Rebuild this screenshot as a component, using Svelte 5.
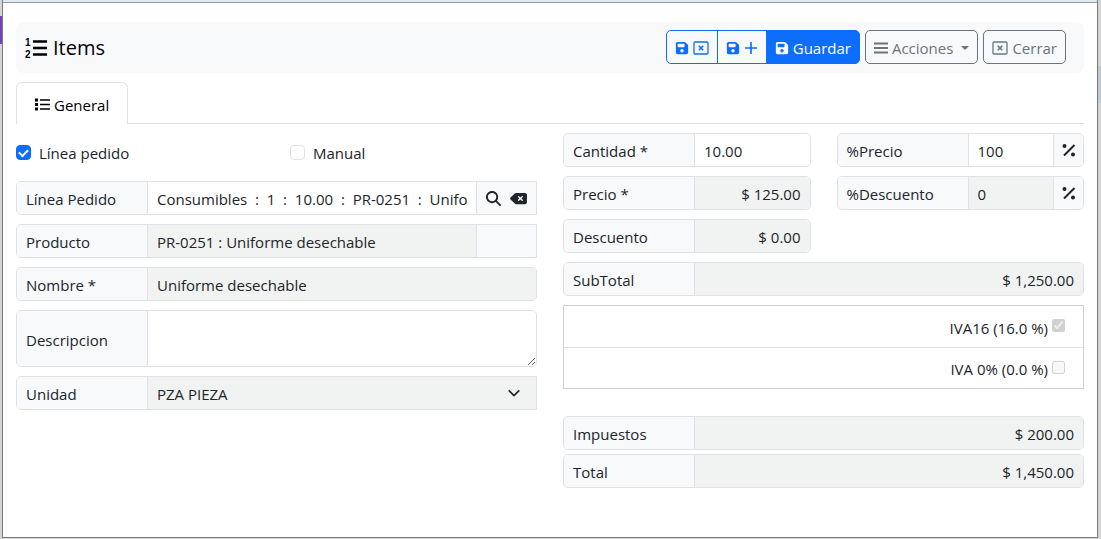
<script lang="ts">
	let useOrderLine = $state(true);
	let manual = $state(false);
	let orderLine = $state('Consumibles  :  1  :  10.00  :  PR-0251  :  Uniforme desechable');
	let description = $state('');
	let quantity = $state('10.00');
	let pricePercent = $state('100');

	const taxes = [
		{ id: 'iva16', name: 'IVA16 (16.0 %)', applied: true },
		{ id: 'iva0', name: 'IVA 0% (0.0 %)', applied: false }
	];

	const totals = [
		{ id: 'impuestos', label: 'Impuestos', value: '$ 200.00' },
		{ id: 'total', label: 'Total', value: '$ 1,450.00' }
	];
</script>

{#snippet saveIcon()}
	<svg class="icon" viewBox="0 0 448 512" fill="currentColor" aria-hidden="true">
		<path fill-rule="evenodd" d="M64 32C28.7 32 0 60.7 0 96V416c0 35.3 28.7 64 64 64H384c35.3 0 64-28.7 64-64V173.3c0-17-6.7-33.3-18.7-45.3L352 50.7C340 38.7 323.7 32 306.7 32H64zm0 96c0-17.7 14.3-32 32-32H288c17.7 0 32 14.3 32 32v64c0 17.7-14.3 32-32 32H96c-17.7 0-32-14.3-32-32V128zM224 288a64 64 0 1 1 0 128 64 64 0 1 1 0-128z" />
	</svg>
{/snippet}

{#snippet closeIcon()}
	<svg class="icon wide" viewBox="0 0 16 14" fill="none" stroke="currentColor" aria-hidden="true">
		<rect x="1" y="1" width="14" height="12" rx="1" stroke-width="1.3" />
		<path d="M5.8 4.8l4.4 4.4M10.2 4.8L5.8 9.2" stroke-width="1.6" />
	</svg>
{/snippet}

{#snippet percentIcon()}
	<svg class="icon" viewBox="0 0 14 14" aria-hidden="true">
		<path d="M2 12.5L12.5 2" stroke="currentColor" stroke-width="2" />
		<circle cx="2.5" cy="3" r="2" fill="currentColor" />
		<circle cx="11" cy="11.5" r="2" fill="currentColor" />
	</svg>
{/snippet}

<div class="backdrop">
	<main class="window">
		<header class="toolbar">
			<h1>
				<svg viewBox="0 0 22 20" aria-hidden="true">
					<path d="M8 3.5h14M8 10h14M8 16.5h14" stroke="currentColor" stroke-width="2.4" />
					<text x="0" y="8" class="digit">1</text>
					<text x="0" y="20" class="digit">2</text>
				</svg>
				Items
			</h1>
			<div class="btn-group">
				<button type="button" class="btn primary" aria-label="Guardar y cerrar">
					{@render saveIcon()}
					{@render closeIcon()}
				</button>
				<button type="button" class="btn primary" aria-label="Guardar y agregar">
					{@render saveIcon()}
					<svg class="icon" viewBox="0 0 14 14" aria-hidden="true">
						<path d="M7 1v12M1 7h12" stroke="currentColor" stroke-width="1.7" />
					</svg>
				</button>
				<button type="button" class="btn primary solid">
					{@render saveIcon()}
					Guardar
				</button>
			</div>
			<button type="button" class="btn" aria-haspopup="menu">
				<svg class="icon" viewBox="0 0 14 14" aria-hidden="true">
					<path d="M0 2.5h14M0 7h14M0 11.5h14" stroke="currentColor" stroke-width="1.8" />
				</svg>
				Acciones
				<span class="caret"></span>
			</button>
			<button type="button" class="btn">
				{@render closeIcon()}
				Cerrar
			</button>
		</header>

		<nav class="tabs" role="tablist">
			<button type="button" class="tab" role="tab" aria-selected="true">
				<svg viewBox="0 0 15 13" aria-hidden="true">
					<path d="M5 2h10M5 6.5h10M5 11h10" stroke="currentColor" stroke-width="1.6" />
					<path d="M0 2h3M0 6.5h3M0 11h3" stroke="currentColor" stroke-width="3" />
				</svg>
				General
			</button>
		</nav>

		<form class="columns">
			<div class="stack">
				<div class="checks">
					<label class="check"><input type="checkbox" bind:checked={useOrderLine} />Línea pedido</label>
					<label class="check"><input type="checkbox" bind:checked={manual} />Manual</label>
				</div>

				<div class="field square">
					<label for="linea">Línea Pedido</label>
					<input id="linea" type="text" bind:value={orderLine} />
					<div class="addon lookup">
						<button type="button" aria-label="Buscar">
							<svg class="search" viewBox="0 0 512 512" fill="currentColor">
								<path fill-rule="evenodd" d="M416 208c0 45.9-14.9 88.3-40 122.7L502.6 457.4c12.5 12.5 12.5 32.8 0 45.3s-32.8 12.5-45.3 0L330.7 376c-34.4 25.2-76.8 40-122.7 40C93.1 416 0 322.9 0 208S93.1 0 208 0S416 93.1 416 208zM208 352a144 144 0 1 0 0-288 144 144 0 1 0 0 288z" />
							</svg>
						</button>
						<button type="button" aria-label="Borrar" onclick={() => (orderLine = '')}>
							<svg class="erase" viewBox="0 0 576 512" fill="currentColor">
								<path fill-rule="evenodd" d="M576 128c0-35.3-28.7-64-64-64H205.3c-17 0-33.3 6.7-45.3 18.7L9.4 233.4c-6 6-9.4 14.1-9.4 22.6s3.4 16.6 9.4 22.6L160 429.3c12 12 28.3 18.7 45.3 18.7H512c35.3 0 64-28.7 64-64V128zM271 175c9.4-9.4 24.6-9.4 33.9 0l47 47 47-47c9.4-9.4 24.6-9.4 33.9 0s9.4 24.6 0 33.9l-47 47 47 47c9.4 9.4 9.4 24.6 0 33.9s-24.6 9.4-33.9 0l-47-47-47 47c-9.4 9.4-24.6 9.4-33.9 0s-9.4-24.6 0-33.9l47-47-47-47c-9.4-9.4-9.4-24.6 0-33.9z" />
							</svg>
						</button>
					</div>
				</div>

				<div class="field square">
					<label for="producto">Producto</label>
					<input id="producto" type="text" value="PR-0251 : Uniforme desechable" disabled />
					<div class="addon lookup"></div>
				</div>

				<div class="field">
					<label for="nombre">Nombre *</label>
					<input id="nombre" type="text" value="Uniforme desechable" disabled />
				</div>

				<div class="field tall">
					<label for="descripcion">Descripcion</label>
					<textarea id="descripcion" bind:value={description}></textarea>
				</div>

				<div class="field square">
					<label for="unidad">Unidad</label>
					<div class="select">
						<select id="unidad" disabled>
							<option>PZA PIEZA</option>
						</select>
						<svg viewBox="0 0 16 16" fill="none" stroke="currentColor" stroke-width="2" aria-hidden="true">
							<path d="M2 5l6 6 6-6" />
						</svg>
					</div>
				</div>
			</div>

			<div class="stack">
				<div class="pair">
					<div class="field">
						<label for="cantidad">Cantidad *</label>
						<input id="cantidad" type="text" bind:value={quantity} />
					</div>
					<div class="field">
						<label for="pprecio">%Precio</label>
						<input id="pprecio" type="text" bind:value={pricePercent} />
						<div class="addon">{@render percentIcon()}</div>
					</div>
					<div class="field">
						<label for="precio">Precio *</label>
						<input id="precio" class="amount" type="text" value="$ 125.00" disabled />
					</div>
					<div class="field">
						<label for="pdescuento">%Descuento</label>
						<input id="pdescuento" type="text" value="0" disabled />
						<div class="addon">{@render percentIcon()}</div>
					</div>
					<div class="field">
						<label for="descuento">Descuento</label>
						<input id="descuento" class="amount" type="text" value="$ 0.00" disabled />
					</div>
				</div>

				<div class="field">
					<label for="subtotal">SubTotal</label>
					<input id="subtotal" class="amount" type="text" value="$ 1,250.00" disabled />
				</div>

				<ul class="taxes">
					{#each taxes as tax (tax.id)}
						<li>
							<label for={tax.id}>{tax.name}</label>
							<input id={tax.id} type="checkbox" checked={tax.applied} disabled />
						</li>
					{/each}
				</ul>

				<div class="totals">
					{#each totals as total (total.id)}
						<div class="field">
							<label for={total.id}>{total.label}</label>
							<input id={total.id} class="amount" type="text" value={total.value} disabled />
						</div>
					{/each}
				</div>
			</div>
		</form>
	</main>
</div>

<style>
	:global(body) {
		margin: 0;
	}

	/* dimmed page behind the window, only its edges show */
	.backdrop {
		--border: #dee2e6;
		--blue: #0d6efd;
		--gray: #6c757d;
		box-sizing: border-box;
		min-height: 100vh;
		padding: 0 3px 1px 2px;
		background:
			linear-gradient(#6f42c1, #6f42c1) 0 16px / 2px 28px no-repeat,
			linear-gradient(#bccdd6, #bccdd6) 100% 66px / 3px 37px no-repeat,
			#d5d5d5;
		display: flex;
		color: #212529;
		font: 15px/24px 'Open Sans', 'Noto Sans', sans-serif;
	}

	.backdrop :global(*) {
		box-sizing: border-box;
	}

	.window {
		flex: 1;
		min-width: 0;
		padding: 19px 13px 16px;
		background: #fff;
		border: 1px solid #777b7d;
		border-top: 0;
		box-shadow: inset 0 2px #dcebef, inset 0 3px #969c9e;
	}

	button,
	input,
	select,
	textarea {
		font: inherit;
		color: inherit;
		margin: 0;
	}

	.toolbar {
		display: flex;
		align-items: center;
		gap: 5px;
		margin-top: 3px;
		padding: 8px 18px 9px 9px;
		background: #f8f9fb;
		border-radius: 8px;
	}

	h1 {
		flex: 1;
		display: flex;
		align-items: center;
		gap: 6px;
		margin: 0;
		padding-top: 2px;
		color: #000;
		font-size: 20px;
		font-weight: 400;
		line-height: 24px;
	}

	h1 svg {
		width: 22px;
		height: 20px;
		overflow: visible;
	}

	.digit {
		font: bold 10px 'Liberation Sans', sans-serif;
	}

	.btn {
		display: flex;
		align-items: center;
		gap: 4px;
		height: 34px;
		padding: 2px 8px 0;
		color: var(--gray);
		background: transparent;
		border: 1px solid currentColor;
		border-radius: 5px;
	}

	.btn-group {
		display: flex;
	}

	.primary {
		color: var(--blue);
	}

	.solid {
		color: #fff;
		background: var(--blue);
		border-color: var(--blue);
	}

	.btn-group .btn:not(:first-child) {
		margin-left: -1px;
		border-top-left-radius: 0;
		border-bottom-left-radius: 0;
	}

	.btn-group .btn:not(:last-child) {
		border-top-right-radius: 0;
		border-bottom-right-radius: 0;
	}

	.icon {
		width: 14px;
		height: 14px;
		flex-shrink: 0;
	}

	.icon.wide {
		width: 16px;
	}

	.caret {
		margin-left: 4px;
		border: 4px solid transparent;
		border-top-color: currentColor;
		border-bottom: 0;
	}

	.tabs {
		display: flex;
		margin-top: 9px;
		border-bottom: 1px solid var(--border);
	}

	.tab {
		display: flex;
		align-items: center;
		gap: 4px;
		height: 42px;
		margin-bottom: -1px;
		padding: 2px 18px 0;
		color: #000;
		background: #fff;
		border: 1px solid var(--border);
		border-bottom: 0;
		border-radius: 6px 6px 0 0;
	}

	.tab svg {
		width: 15px;
		height: 13px;
	}

	.columns {
		display: grid;
		grid-template-columns: 1fr 1fr;
		gap: 26px;
		margin-top: 9px;
	}

	.stack {
		display: flex;
		flex-direction: column;
		gap: 9px;
		min-width: 0;
	}

	.checks {
		display: grid;
		grid-template-columns: 274px 1fr;
		height: 39px;
		align-items: center;
	}

	.check {
		display: flex;
		align-items: center;
		gap: 8px;
	}

	input[type='checkbox'] {
		width: 15px;
		height: 15px;
		margin: 0;
	}

	.check input {
		display: grid;
		place-items: center;
		appearance: none;
		background: #fff;
		border: 1px solid var(--border);
		border-radius: 4px;
	}

	.check input:checked {
		background: var(--blue);
		border-color: var(--blue);
	}

	.check input:checked::before {
		content: '';
		width: 7px;
		height: 4px;
		margin-bottom: 2px;
		border: solid #fff;
		border-width: 0 0 2px 2px;
		transform: rotate(-45deg);
	}

	.field {
		display: flex;
		min-width: 0;
		height: 34px;
		border: 1px solid var(--border);
		border-radius: 5px;
		overflow: hidden;
	}

	.field.square {
		border-radius: 5px 0 0 5px;
	}

	.field.tall {
		height: 57px;
	}

	.field label {
		display: flex;
		align-items: center;
		flex: 0 0 131px;
		padding: 2px 9px 0;
		background: #f8f9fb;
		border-right: 1px solid var(--border);
	}

	.field input,
	.field textarea,
	.field select {
		flex: 1;
		width: 100%;
		min-width: 0;
		padding: 2px 9px 0;
		background: #fff;
		border: 0;
		border-radius: 0;
		opacity: 1;
	}

	.field input:disabled,
	.field select:disabled {
		color: #212529;
		background: #f1f3f2;
	}

	.field .amount {
		text-align: right;
	}

	.select {
		flex: 1;
		display: grid;
		align-items: center;
	}

	.select select,
	.select svg {
		grid-area: 1 / 1;
	}

	.select select {
		height: 100%;
		appearance: none;
	}

	.select svg {
		justify-self: end;
		width: 14px;
		height: 14px;
		margin-right: 15px;
		pointer-events: none;
	}

	.addon {
		display: flex;
		align-items: center;
		justify-content: center;
		flex: 0 0 30px;
		background: #f8f9fb;
		border-left: 1px solid var(--border);
	}

	.addon.lookup {
		flex-basis: 60px;
		gap: 9px;
	}

	.addon button {
		display: flex;
		padding: 0;
		background: none;
		border: 0;
	}

	.search {
		width: 15px;
		height: 15px;
	}

	.erase {
		width: 17px;
		height: 15px;
	}

	.pair {
		display: grid;
		grid-template-columns: 1fr 1fr;
		gap: 9px 26px;
	}

	.taxes {
		margin: 0;
		padding: 0;
		list-style: none;
		border: 1px solid #cdcfd1;
	}

	.taxes li {
		display: flex;
		align-items: center;
		justify-content: flex-end;
		gap: 4px;
		height: 41px;
		padding: 0 18px 2px 0;
	}

	.taxes li + li {
		border-top: 1px solid var(--border);
	}

	.taxes label {
		padding-top: 4px;
	}

	.taxes input {
		width: 13px;
		height: 13px;
	}

	.totals {
		display: grid;
		gap: 4px;
		margin-top: 18px;
	}
</style>
